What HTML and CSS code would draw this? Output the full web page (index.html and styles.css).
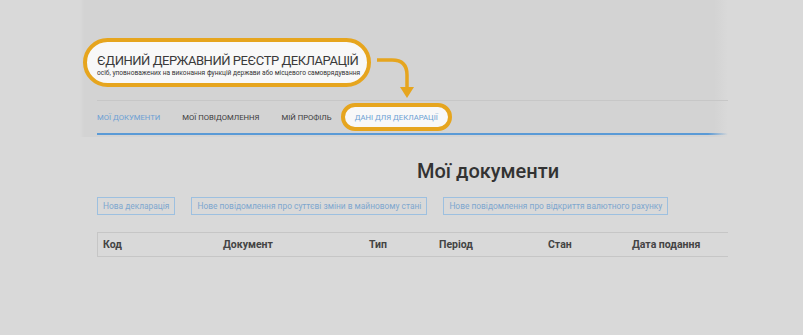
FILE: index.html
```html
<!DOCTYPE html>
<html lang="uk">
<head>
  <meta charset="UTF-8" />
  <meta name="viewport" content="width=device-width, initial-scale=1" />
  <title>Мої документи</title>
  <link rel="stylesheet" href="styles.css">
</head>
<body>
  <div class="shot">
    <div class="topbar">
      <div class="brand">
        <div class="brand-title">ЄДИНИЙ ДЕРЖАВНИЙ РЕЄСТР ДЕКЛАРАЦІЙ</div>
        <div class="brand-sub">осіб, уповноважених на виконання функцій держави або місцевого самоврядування</div>
      </div>
      <svg class="arrow" width="50" height="52" viewBox="0 0 50 52">
        <path d="M7 10 H22 Q37 10 37 25 V38" fill="none" stroke="#e6a51e" stroke-width="3.5" />
        <polygon points="30,37 44,37 37,48" fill="#e6a51e" />
      </svg>
      <div class="divider"></div>
      <nav class="nav">
        <a class="nav-item active">Мої документи</a>
        <a class="nav-item">Мої повідомлення</a>
        <a class="nav-item">Мій профіль</a>
        <a class="nav-item highlight">Дані для декларації</a>
      </nav>
      <div class="nav-line"></div>
    </div>

    <div class="content">
      <h1>Мої документи</h1>
      <div class="actions">
        <button>Нова декларація</button>
        <button>Нове повідомлення про суттєві зміни в майновому стані</button>
        <button>Нове повідомлення про відкриття валютного рахунку</button>
      </div>
      <div class="table-head">
        <span class="col-code">Код</span>
        <span class="col-doc">Документ</span>
        <span class="col-type">Тип</span>
        <span class="col-period">Період</span>
        <span class="col-state">Стан</span>
        <span class="col-date">Дата подання</span>
      </div>
    </div>
  </div>
</body>
</html>
```

FILE: styles.css
```css
body {
  margin: 0;
  background: #d9d9d9;
  font-family: Roboto, "Noto Sans", sans-serif;
  color: #333;
  height: 335px;
  overflow: hidden;
}
.shot {
  margin-left: 80px;
  width: 648px;
}
.topbar {
  position: relative;
  height: 137px;
  background: linear-gradient(to right, #d9d9d9 0, #d3d3d3 4px, #d3d3d3 calc(100% - 14px), #d9d9d9 100%);
  padding-top: 38px;
  box-sizing: border-box;
}
.brand {
  margin-left: 3px;
  width: 288px;
  height: 49px;
  box-sizing: border-box;
  border: 4px solid #e6a51e;
  border-radius: 25px;
  background: #f8f8f8;
  padding: 11px 0 0 10px;
}
.brand-title {
  font-size: 13px;
  line-height: 16px;
  letter-spacing: -0.45px;
  color: #3a3a3a;
  white-space: nowrap;
}
.brand-sub {
  font-size: 6.6px;
  line-height: 9px;
  color: #333;
  white-space: nowrap;
}
.arrow {
  position: absolute;
  left: 290px;
  top: 50px;
}
.divider {
  margin: 13px 0 0 17px;
  border-top: 1px solid #c7c7c7;
}
.nav {
  display: flex;
  align-items: center;
  height: 32px;
  margin-left: 17px;
}
.nav-item {
  font-size: 7.7px;
  text-transform: uppercase;
  color: #3a3a3a;
  margin-right: 22px;
  white-space: nowrap;
}
.nav-item.active {
  color: #6b9fd3;
}
.nav-item.highlight {
  margin-left: -13px;
  color: #6b9fd3;
  background: #f8f8f8;
  border: 4px solid #e6a51e;
  border-radius: 14px;
  height: 28px;
  box-sizing: border-box;
  display: flex;
  align-items: center;
  padding: 0 10px 0 10px;
}
.nav-line {
  margin-left: 17px;
  height: 2px;
  background: linear-gradient(to right, #5a9ad6 calc(100% - 20px), rgba(90, 154, 214, 0));
}
.content {
  padding-left: 17px;
}
h1 {
  margin: 22px 0 0 320px;
  font-size: 20px;
  line-height: 24px;
  font-weight: 500;
  color: #333;
}
.actions {
  display: flex;
  gap: 16px;
  margin-top: 14px;
}
.actions button {
  font-family: Roboto, "Noto Sans", sans-serif;
  font-size: 8.4px;
  color: #7ea7cf;
  background: transparent;
  border: 1px solid #9dc0e0;
  height: 18px;
  padding: 0 5px;
  white-space: nowrap;
}
.table-head {
  display: flex;
  align-items: center;
  margin-top: 17px;
  height: 25px;
  border-top: 1px solid #c6c6c6;
  border-bottom: 1px solid #c6c6c6;
  border-left: 1px solid #c6c6c6;
  box-sizing: border-box;
  font-size: 10.5px;
  font-weight: 700;
  color: #444;
  padding-left: 5px;
  width: 631px;
}
.table-head span {
  flex: none;
}
.col-code { width: 120px; }
.col-doc { width: 146px; }
.col-type { width: 70px; }
.col-period { width: 109px; }
.col-state { width: 84px; }
```
